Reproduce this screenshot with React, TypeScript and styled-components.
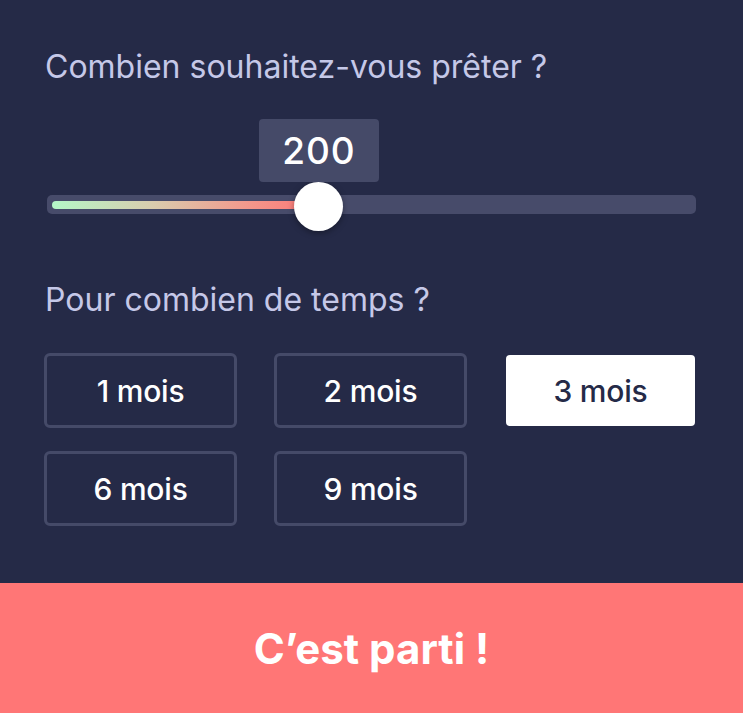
import React, { useState } from "react";
import styled, { createGlobalStyle } from "styled-components";

const Global = createGlobalStyle`
  html, body { margin: 0; padding: 0; background: #252a47; }
  body { font-family: Inter, "Noto Sans", sans-serif; -webkit-font-smoothing: antialiased; }
`;

const Page = styled.div`
  width: 743px;
  height: 713px;
  display: flex;
  flex-direction: column;
  background: #252a47;
  overflow: hidden;
`;

const Content = styled.div`
  flex: 1;
  padding: 49px 48px 0 44px;
  display: flex;
  flex-direction: column;
`;

const Question = styled.div<{ $gap?: number }>`
  font-size: 32px;
  line-height: 36px;
  font-weight: 400;
  color: #c5c8e8;
  padding-left: 1px;
  margin-top: ${(p) => p.$gap ?? 0}px;
`;

const SliderArea = styled.div`
  position: relative;
  margin-top: 34px;
  padding-top: 76px;
  padding-left: 3px;
  margin-right: -1px;
`;

const Track = styled.div`
  position: relative;
  height: 19px;
  border-radius: 5px;
  background: #474b6a;
`;

const Fill = styled.div`
  position: absolute;
  left: 5px;
  top: 5.5px;
  height: 8px;
  border-radius: 4px;
  background: linear-gradient(90deg, #b4f7c8 0%, #d9ccae 40%, #f5958a 80%, #fb7d7a 100%);
`;

const Thumb = styled.div`
  position: absolute;
  top: -13px;
  width: 49px;
  height: 49px;
  margin-left: -24.5px;
  border-radius: 50%;
  background: #ffffff;
  box-shadow: 0 2px 6px rgba(0, 0, 0, 0.35);
`;

const Bubble = styled.div`
  position: absolute;
  top: -76px;
  width: 120px;
  height: 63px;
  margin-left: -60px;
  border-radius: 4px;
  background: #454a68;
  color: #ffffff;
  font-size: 37px;
  font-weight: 500;
  letter-spacing: 1px;
  display: flex;
  align-items: center;
  justify-content: center;
`;

const Options = styled.div`
  margin-top: 35px;
  display: grid;
  grid-template-columns: repeat(3, 193px);
  column-gap: 37px;
  row-gap: 23px;
`;

const Option = styled.button<{ $active?: boolean }>`
  height: 75px;
  box-sizing: border-box;
  border-style: solid;
  border-width: ${(p) => (p.$active ? "2px" : "3px")};
  border-color: ${(p) => (p.$active ? "transparent" : "#454a68")};
  border-radius: 6px;
  background: ${(p) => (p.$active ? "#ffffff" : "transparent")};
  background-clip: padding-box;
  color: ${(p) => (p.$active ? "#252a47" : "#ffffff")};
  font-family: Inter, "Noto Sans", sans-serif;
  font-size: 30px;
  font-weight: 500;
  letter-spacing: -0.2px;
  cursor: pointer;
  padding: 0;
`;

const Footer = styled.button`
  height: 130px;
  flex-shrink: 0;
  border: none;
  background: #ff7676;
  color: #ffffff;
  font-family: Inter, "Noto Sans", sans-serif;
  font-size: 42px;
  font-weight: 700;
  cursor: pointer;
`;

const durations = [1, 2, 3, 6, 9];

export default function App() {
  const [selected, setSelected] = useState(3);
  const pct = 41.9;
  return (
    <Page>
      <Global />
      <Content>
        <Question>Combien souhaitez-vous prêter ?</Question>
        <SliderArea>
          <Track>
            <Fill style={{ width: `calc(${pct}% - 20px)` }} />
            <Thumb style={{ left: `${pct}%` }} />
            <Bubble style={{ left: `${pct}%` }}>200</Bubble>
          </Track>
        </SliderArea>
        <Question $gap={68}>Pour combien de temps ?</Question>
        <Options>
          {durations.map((d) => (
            <Option key={d} $active={d === selected} onClick={() => setSelected(d)}>
              {d} mois
            </Option>
          ))}
        </Options>
      </Content>
      <Footer>C’est parti !</Footer>
    </Page>
  );
}
